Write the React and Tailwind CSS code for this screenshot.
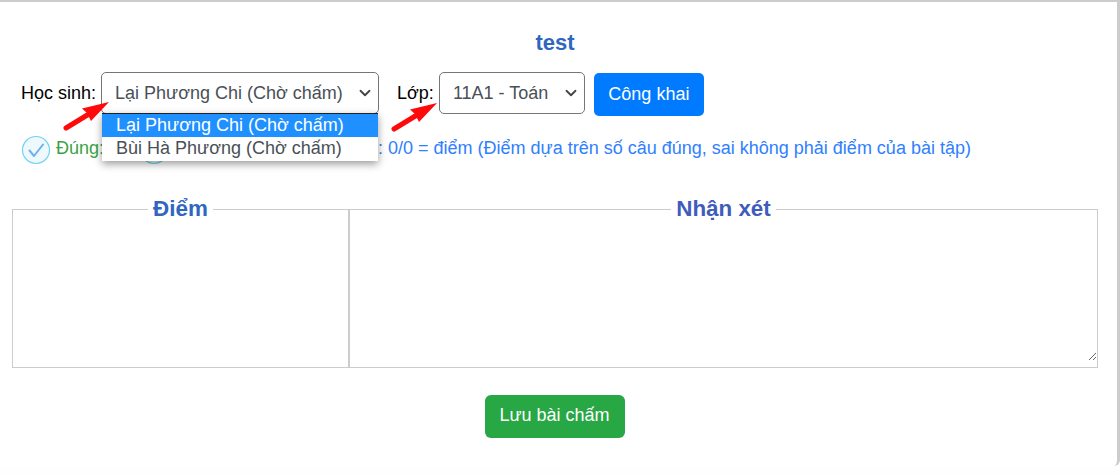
import React from 'react';
import { ChevronDown } from 'lucide-react';

// Red annotation arrow, drawn from the tail up to the tip
const RedArrow = ({ className }) => (
  <svg className={className} width="48" height="34" viewBox="0 0 48 34">
    <path d="M3 28 L26 14" stroke="#ff0a0a" strokeWidth="5" strokeLinecap="round" fill="none" />
    <path d="M46 2 L19 8.5 L24 13 L28 21 Z" fill="#ff0a0a" />
  </svg>
);

const CheckBadge = () => (
  <svg width="30" height="30" viewBox="0 0 30 30" className="shrink-0">
    <circle cx="15" cy="15" r="13.5" fill="#eef9fe" stroke="#72d2f0" strokeWidth="1.2" />
    <path d="M8.5 15.5 L13 21 L22 9.5" fill="none" stroke="#6fb1e8" strokeWidth="2" strokeLinecap="round" strokeLinejoin="round" />
  </svg>
);

const SelectBox = ({ className, children }) => (
  <div className={`relative ${className}`}>
    <select className="appearance-none w-full h-[42px] pl-[13px] pr-[30px] border border-[#767676] rounded-[5px] text-[#495057] bg-white">
      {children}
    </select>
    <ChevronDown size={18} strokeWidth={2.4} className="absolute right-[5px] top-[12px] text-[#444444] pointer-events-none" />
  </div>
);

export default function App() {
  return (
    <div className="w-[1120px] h-[475px] bg-[#fefefe] font-['Liberation_Sans',Arial,sans-serif] text-[18px] overflow-hidden">
      <div className="relative h-[466px] bg-white border-t-2 border-r-[3px] border-[#cccccc] rounded-br-md">
        <h2 className="pt-[27px] text-center text-[22px] leading-[28px] font-bold text-[#2f66bf] pr-[7px]">test</h2>

        <div className="flex items-start mt-[15px] pl-[21px]">
          <label className="leading-[42px] text-black mr-[5px]">Học sinh:</label>
          <div className="relative">
            <SelectBox className="w-[278px]">
              <option>Lại Phương Chi (Chờ chấm)</option>
              <option>Bùi Hà Phương (Chờ chấm)</option>
            </SelectBox>
            {/* opened list of the select */}
            <ul className="absolute z-10 left-[1px] top-[41px] w-[276px] bg-white border-t border-[#222222] text-[#495057] shadow-[0_3px_8px_rgba(0,0,0,0.4)] leading-[23px] pb-[1px]">
              <li className="bg-[#1e90ff] text-white pl-[14px]">Lại Phương Chi (Chờ chấm)</li>
              <li className="pl-[14px]">Bùi Hà Phương (Chờ chấm)</li>
            </ul>
          </div>
          <label className="leading-[42px] text-black ml-[18px] mr-[5px]">Lớp:</label>
          <SelectBox className="w-[146px]">
            <option>11A1 - Toán</option>
          </SelectBox>
          <button className="ml-[9px] mt-[1px] w-[110px] h-[43px] rounded-[5px] bg-[#007bff] text-white">Công khai</button>
        </div>

        <div className="flex items-center h-[30px] mt-[19px] pl-[21px]">
          <CheckBadge />
          <span className="ml-[5px] pb-[4px] text-[#3aa346]">Đúng:</span>
          <span className="ml-[35px]"><CheckBadge /></span>
          <span className="ml-[209px] pb-[4px] text-[#2f80ff]">: 0/0 = điểm (Điểm dựa trên số câu đúng, sai không phải điểm của bài tập)</span>
        </div>

        <div className="flex mt-[32px] ml-[12px] w-[1086px] h-[171px]">
          <fieldset className="w-[337px] h-full border border-[#cccccc]">
            <legend className="mx-auto px-[5px] text-[22.4px] leading-[24px] font-bold text-[#2f66bf]">Điểm</legend>
          </fieldset>
          <fieldset className="flex-1 h-full border border-[#cccccc] flex flex-col">
            <legend className="mx-auto px-[5px] text-[22.4px] leading-[24px] font-bold text-[#3f5cbd]">Nhận xét</legend>
            <textarea className="block w-full h-[140px] outline-none" />
          </fieldset>
        </div>

        <div className="flex justify-center mt-[27px] pr-[8px]">
          <button className="w-[140px] h-[43px] pb-[2px] rounded-[6px] bg-[#28a745] text-white">Lưu bài chấm</button>
        </div>

        <RedArrow className="absolute z-20 left-[63px] top-[98px]" />
        <RedArrow className="absolute z-20 left-[391px] top-[99px]" />
      </div>
    </div>
  );
}
